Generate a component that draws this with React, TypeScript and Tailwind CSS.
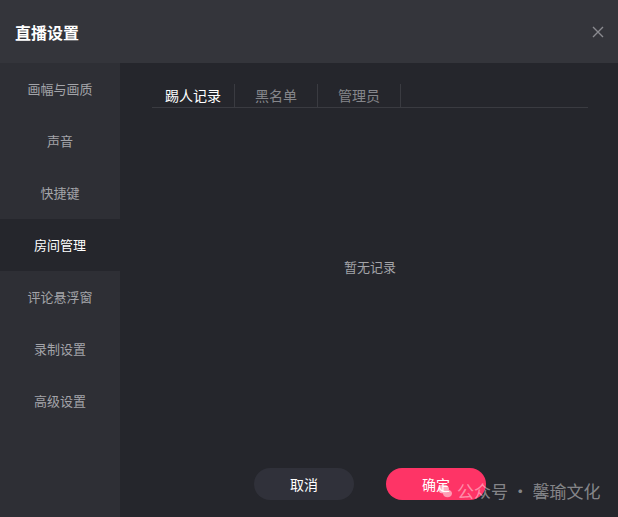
import React from "react";

const items = ["画幅与画质", "声音", "快捷键", "房间管理", "评论悬浮窗", "录制设置", "高级设置"];
const tabs = ["踢人记录", "黑名单", "管理员"];

export default function App() {
  return (
    <div
      className="relative w-[618px] h-[517px] overflow-hidden flex flex-col bg-[#25262c]"
      style={{ fontFamily: '"Microsoft YaHei", "Noto Sans CJK SC", "Noto Sans", sans-serif' }}
    >
      <div className="h-[63px] shrink-0 bg-[#34353b] flex items-center justify-between pl-[15px] pr-[13px]">
        <div className="text-[16px] font-bold text-white leading-none">直播设置</div>
        <svg width="14" height="14" viewBox="0 0 14 14">
          <path d="M2 2 L12 12 M12 2 L2 12" stroke="#8a8b90" strokeWidth="1.4" />
        </svg>
      </div>
      <div className="flex flex-1">
        <div className="w-[120px] shrink-0 bg-[#2e2f35] flex flex-col">
          {items.map((t) => (
            <div
              key={t}
              className={
                "h-[52px] flex items-center justify-center text-[13px] " +
                (t === "房间管理" ? "bg-[#25262c] text-white" : "text-[#a3a4a9]")
              }
            >
              {t}
            </div>
          ))}
        </div>
        <div className="flex-1 flex flex-col pl-[32px] pr-[30px] pt-[21px] pb-[17px]">
          <div className="flex border-b border-[#3a3b41] h-[24px]">
            {tabs.map((t, i) => (
              <div
                key={t}
                className={
                  "w-[83px] flex items-center justify-center border-r border-[#3a3b41] text-[14px] " +
                  (i === 0 ? "text-white" : "text-[#85868b]")
                }
              >
                {t}
              </div>
            ))}
          </div>
          <div className="mt-[150px] text-center text-[13px] text-[#a3a4a9] leading-[18px]">暂无记录</div>
          <div className="flex-1" />
          <div className="flex justify-center gap-8">
            <button className="w-[100px] h-[32px] rounded-full bg-[#30313a] text-white text-[14px]">取消</button>
            <button className="w-[100px] h-[32px] rounded-full bg-[#fe3466] text-white text-[14px]">确定</button>
          </div>
        </div>
      </div>
      <div className="absolute left-[437px] top-[482px] flex items-center gap-[4px] whitespace-nowrap text-[17px] text-white/45 leading-none pointer-events-none">
        <svg width="16" height="16" viewBox="0 0 16 16" className="opacity-60 shrink-0">
          <ellipse cx="6.5" cy="6" rx="5.5" ry="4.6" fill="#ffffff" />
          <ellipse cx="10.5" cy="10.5" rx="4.5" ry="3.8" fill="#ffffff" opacity="0.85" />
        </svg>
        <span>公众号 · 馨瑜文化</span>
      </div>
    </div>
  );
}
